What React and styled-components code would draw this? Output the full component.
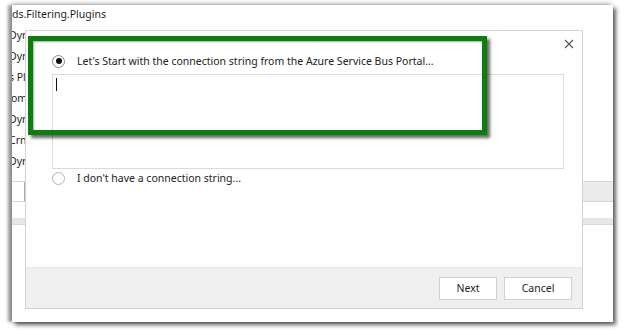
import React from 'react'
import styled, { createGlobalStyle } from 'styled-components'

const GlobalStyle = createGlobalStyle`
  html, body {
    margin: 0;
    padding: 0;
    background: #ffffff;
  }
  body {
    font-family: "Noto Sans", "Open Sans", "Liberation Sans", sans-serif;
  }
`

const font = `"Noto Sans", "Open Sans", "Liberation Sans", sans-serif`

const Page = styled.div`
  width: 628px;
  height: 332px;
  box-sizing: border-box;
  padding: 5px 15px 10px 12px;
  overflow: hidden;
  background: #ffffff;
`

const Frame = styled.div`
  position: relative;
  width: 601px;
  height: 317px;
  background: #ffffff;
  box-shadow: 3px 3px 4px rgba(0, 0, 0, 0.6), -4px 0 3px rgba(0, 0, 0, 0.4), 0 -3px 4px rgba(0, 0, 0, 0.12);
  overflow: hidden;
`

const BackList = styled.div`
  display: flex;
  flex-direction: column;
  margin-top: -1px;
`

const BackRow = styled.div`
  height: 21px;
  line-height: 21px;
  margin-left: ${p => p.$shift}px;
  font-family: ${font};
  font-size: 10.5px;
  color: #1e1e1e;
  white-space: nowrap;
`

const Toolbar = styled.div`
  margin-top: 9px;
  height: 21px;
  box-sizing: border-box;
  display: flex;
  background: #ebebeb;
  border-top: 1px solid #d6d6d6;
  border-bottom: 1px solid #d6d6d6;
`

const ToolbarCell = styled.div`
  width: 12px;
  background: #ffffff;
  border-right: 1px solid #a8a8a8;
`

const LowerBand = styled.div`
  margin-top: 16px;
  height: 6px;
  background: #e6e6e6;
  border-bottom: 1px solid #d8d8d8;
`

const Dialog = styled.div`
  position: absolute;
  left: 13px;
  top: 25px;
  width: 558px;
  height: 279px;
  box-sizing: border-box;
  border: 1px solid #d2d2d2;
  background: #ffffff;
  display: flex;
  flex-direction: column;
  font-family: ${font};
  font-size: 10.5px;
  color: #222222;
`

const CloseButton = styled.div`
  position: absolute;
  top: 8px;
  right: 8px;
  width: 10px;
  height: 10px;
  display: flex;
  align-items: center;
  justify-content: center;
`

const Body = styled.div`
  display: flex;
  flex-direction: column;
  padding: 22px 0 0 26px;
`

const RadioRow = styled.label`
  display: flex;
  align-items: center;
  gap: 12px;
  height: ${p => p.$h}px;
`

const Radio = styled.span`
  width: 13px;
  height: 13px;
  box-sizing: border-box;
  border-radius: 50%;
  border: 1px solid ${p => (p.$checked ? '#8a8a8a' : '#b4b4b4')};
  background: #ffffff;
  display: flex;
  align-items: center;
  justify-content: center;
  flex-shrink: 0;

  &::after {
    content: '';
    width: 6px;
    height: 6px;
    border-radius: 50%;
    background: ${p => (p.$checked ? '#111111' : 'transparent')};
  }
`

const RadioText = styled.span`
  white-space: nowrap;
`

const TextBox = styled.div`
  margin: 5px 0 1px;
  width: 512px;
  height: 95px;
  box-sizing: border-box;
  border: 1px solid #dadada;
  padding: 3px 0 0 3px;
`

const Caret = styled.div`
  width: 1px;
  height: 13px;
  background: #111111;
`

const Footer = styled.div`
  margin-top: auto;
  height: 40px;
  background: #efefef;
  border-top: 1px solid #e8e8e8;
  display: flex;
  justify-content: flex-end;
  align-items: center;
  gap: 7px;
  padding-right: 10px;
`

const Button = styled.div`
  width: ${p => p.$w}px;
  height: 23px;
  box-sizing: border-box;
  background: #ffffff;
  border: 1px solid #d0d0d0;
  display: flex;
  align-items: center;
  justify-content: center;
  font-size: 10.5px;
  color: #222222;
`

const Highlight = styled.div`
  position: absolute;
  left: 16px;
  top: 31px;
  width: 459px;
  height: 99px;
  box-sizing: border-box;
  border: 5px solid #0b7f0b;
  box-shadow: 3px 3px 3px rgba(0, 0, 0, 0.6), inset 1px 1px 2px rgba(0, 0, 0, 0.35);
`

const backRows = [
  { text: 'ds.Filtering.Plugins', shift: 0 },
  { text: 'Dyr', shift: -3 },
  { text: 'Dyr', shift: -3 },
  { text: 's Pl', shift: -3 },
  { text: 'om', shift: -1 },
  { text: 'Dyr', shift: -3 },
  { text: 'Crn', shift: -3 },
  { text: 'Dyr', shift: -3 },
]

const App = () => {
  return (
    <Page>
      <GlobalStyle />
      <Frame>
        <BackList>
          {backRows.map((row, i) => (
            <BackRow key={i} $shift={row.shift}>{row.text}</BackRow>
          ))}
        </BackList>
        <Toolbar>
          <ToolbarCell />
        </Toolbar>
        <LowerBand />

        <Dialog>
          <CloseButton>
            <svg width="10" height="10" viewBox="0 0 10 10">
              <path d="M1 1 L9 9 M9 1 L1 9" stroke="#555555" strokeWidth="1.1" fill="none" />
            </svg>
          </CloseButton>
          <Body>
            <RadioRow $h={16}>
              <Radio $checked />
              <RadioText>Let's Start with the connection string from the Azure Service Bus Portal...</RadioText>
            </RadioRow>
            <TextBox>
              <Caret />
            </TextBox>
            <RadioRow $h={16}>
              <Radio />
              <RadioText>I don't have a connection string...</RadioText>
            </RadioRow>
          </Body>
          <Footer>
            <Button $w={58}>Next</Button>
            <Button $w={68}>Cancel</Button>
          </Footer>
        </Dialog>

        <Highlight />
      </Frame>
    </Page>
  )
}

export default App
